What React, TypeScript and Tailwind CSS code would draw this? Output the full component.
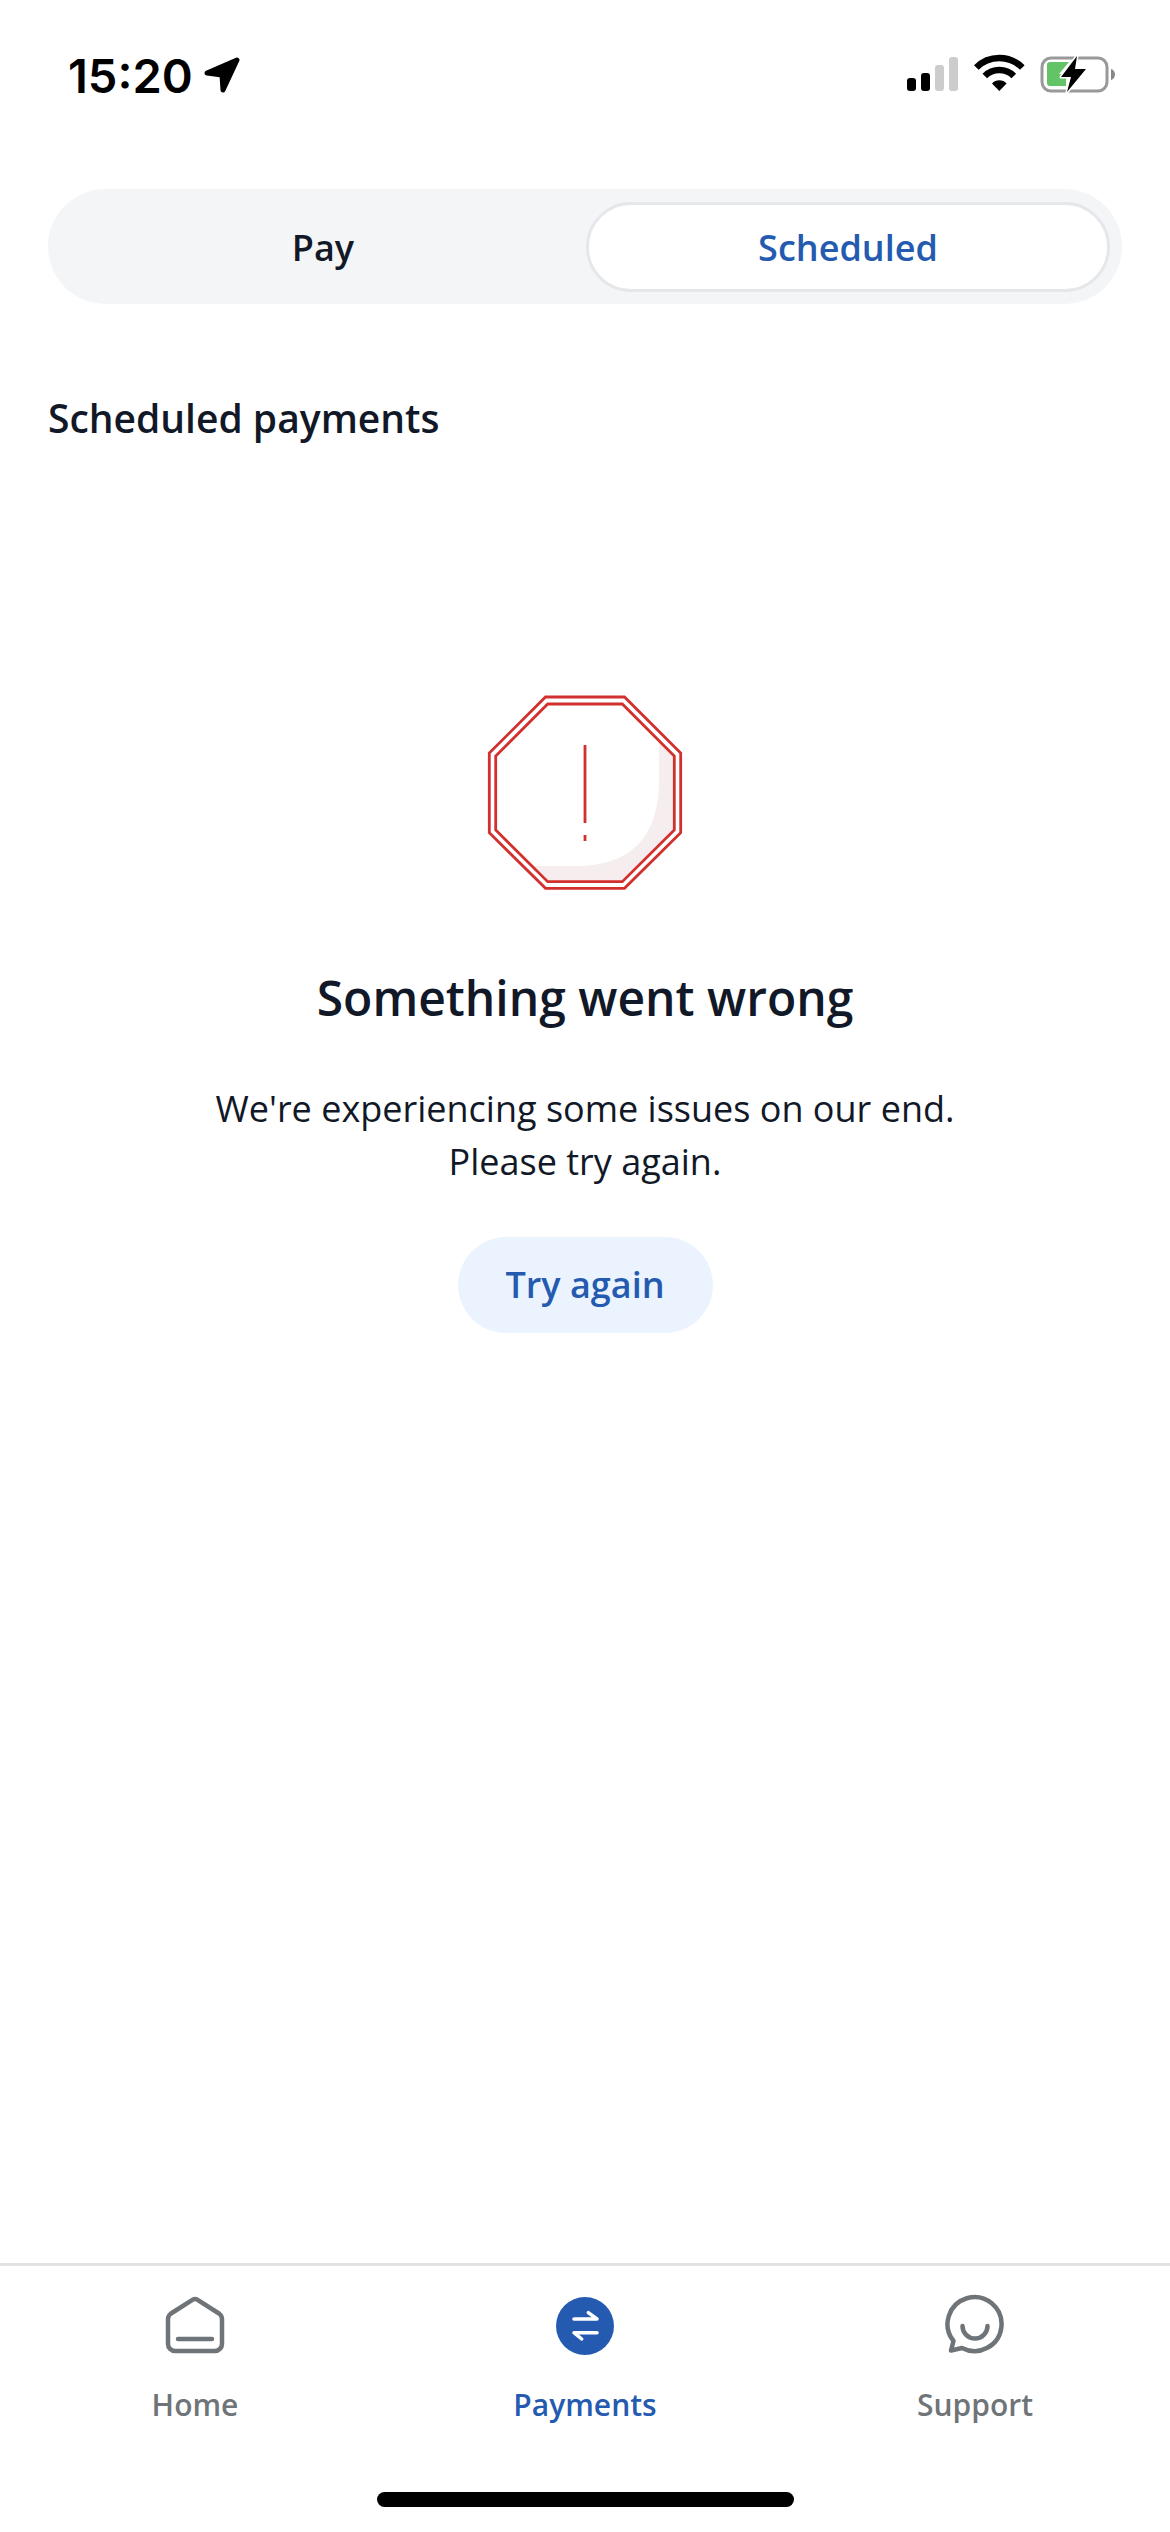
const StatusIcons = () => (
  <svg width="260" height="90" viewBox="0 0 260 90">
    <rect x="27" y="48" width="9" height="13" rx="3" fill="#000" />
    <rect x="41" y="43" width="9" height="18" rx="3" fill="#000" />
    <rect x="55" y="35" width="9" height="26" rx="3" fill="#ccc" />
    <rect x="69" y="27" width="9" height="34" rx="3" fill="#ccc" />
    <path d="M96.300 37.500A32.500 32.500 0 0 1 142.300 37.500" fill="none" stroke="#000" strokeWidth="6.500" />
    <path d="M104.800 46A20.500 20.500 0 0 1 133.800 46" fill="none" stroke="#000" strokeWidth="6.500" />
    <path d="M119.300 61L112 53.500A10 10 0 0 1 126.600 53.500Z" fill="#000" />
    <rect x="162" y="28" width="65" height="33" rx="9" fill="none" stroke="#999" strokeWidth="3" />
    <path d="M231 39v11a6 6 0 0 0 4-5.500a6 6 0 0 0-4-5.500Z" fill="#888" />
    <path d="M170 32H189L179 44H186V56H170a3 3 0 0 1-3-3V35a3 3 0 0 1 3-3Z" fill="#63c467" />
    <path d="M197 26L181 47H191L187 62L206 39H195Z" fill="#000" stroke="#fff" strokeWidth="3" paintOrder="stroke" strokeLinejoin="round" />
  </svg>
);

const Octagon = () => (
  <svg width="240" height="220" viewBox="0 0 240 220">
    <polygon points="82.700,24 157.300,24 209.300,76 209.300,150 157.300,201.700 82.700,201.700 30.700,150 30.700,76" fill="#f6eeee" />
    <path d="M82.700 24H157.300L194 60V100Q194 186 110 186H67L30.700 150V76Z" fill="#fff" />
    <polygon points="82.700,24 157.300,24 209.300,76 209.300,150 157.300,201.700 82.700,201.700 30.700,150 30.700,76" fill="none" stroke="#d2302e" strokeWidth="2.800" />
    <polygon points="80.500,17 159.500,17 215.700,73 215.700,152.700 159.500,208.300 80.500,208.300 24.300,152.700 24.300,73" fill="none" stroke="#d2302e" strokeWidth="2.800" />
    <path d="M120 65V143M120 155V161" fill="none" stroke="#d2302e" strokeWidth="2.800" />
  </svg>
);

const HomeIcon = () => (
  <svg width="64" height="64" viewBox="0 0 64 64" fill="none" stroke="#6f7478" strokeWidth="4.500" strokeLinecap="round" strokeLinejoin="round">
    <path d="M29.800 5.700a4 4 0 0 1 4.400 0L56 19.500a7 7 0 0 1 3 5.500V50a7 7 0 0 1-7 7H12a7 7 0 0 1-7-7V25a7 7 0 0 1 3-5.500Z" />
    <path d="M15 45H49" strokeWidth="4.500" />
  </svg>
);

const PaymentsIcon = () => (
  <div className="flex h-16 w-16 items-center justify-center">
    <div className="h-[58px] w-[58px] rounded-full bg-[#245bb0]">
      <svg width="58" height="58" viewBox="0 0 58 58" fill="none" stroke="#fff" strokeWidth="3.500" strokeLinecap="round" strokeLinejoin="round">
        <path d="M18 22H41L32.300 15.700" />
        <path d="M41 35.700H18L25.700 42" />
      </svg>
    </div>
  </div>
);

const SupportIcon = () => (
  <svg width="64" height="64" viewBox="0 0 64 64" fill="none" stroke="#6f7478" strokeWidth="4.500" strokeLinecap="round" strokeLinejoin="round">
    <path d="M10.500 47L8 56.500L19 54A27 27 0 1 0 10.500 47Z" />
    <path d="M19.500 32a12.500 12.500 0 0 0 25 0" />
  </svg>
);

const tabs = [
  { label: "Home", icon: <HomeIcon />, active: false },
  { label: "Payments", icon: <PaymentsIcon />, active: true },
  { label: "Support", icon: <SupportIcon />, active: false },
];

export default function App() {
  return (
    <div className="flex h-[2532px] w-[1170px] flex-col overflow-hidden bg-white font-['Open_Sans',sans-serif]">
      {/* status bar */}
      <div className="flex h-[150px] items-center justify-between pl-[68px] pr-[30px]">
        <div className="flex items-center gap-[11px]">
          <span className="font-['Inter',sans-serif] text-[47px] leading-none font-semibold text-black">15:20</span>
          <svg width="36" height="36" viewBox="0 0 36 36" fill="#000" stroke="#000" strokeWidth="5" strokeLinejoin="round">
            <path d="M33 3L19 33L18 18L3 16Z" />
          </svg>
        </div>
        <StatusIcons />
      </div>

      {/* segmented control */}
      <div className="mx-12 mt-[39px] flex h-[115px] items-center rounded-full bg-[#f4f5f7] pl-3 pr-3">
        <div className="flex-1 pt-[2px] text-center text-[36px] font-semibold text-[#111827]">Pay</div>
        <div className="flex h-[90px] w-[524px] items-center justify-center rounded-full border-[3px] border-[#e5e7eb] bg-white pt-[2px] text-[36px] font-semibold text-[#245bb0]">
          Scheduled
        </div>
      </div>

      <h2 className="mx-12 mt-[90px] text-[39px] leading-[48px] font-semibold text-[#111827]">Scheduled payments</h2>

      {/* error state */}
      <div className="mt-[238px] flex flex-col items-center">
        <Octagon />
        <h1 className="mt-[66px] text-[48px] leading-[64px] font-semibold text-[#111827]">Something went wrong</h1>
        <p className="mt-[52px] text-center text-[36px] leading-[53px] text-[#111827]">
          We're experiencing some issues on our end.
          <br />
          Please try again.
        </p>
        <button type="button" className="mt-[49px] h-[96px] w-[255px] rounded-full bg-[#ebf4fe] text-[36px] font-semibold text-[#245bb0]">
          Try again
        </button>
      </div>

      {/* tab bar */}
      <div className="mt-auto flex h-[269px] flex-col border-t-[3px] border-[#e2e2e2]">
        <div className="grid grid-cols-3 pt-7">
          {tabs.map((tab) => (
            <div key={tab.label} className="flex flex-col items-center">
              {tab.icon}
              <span className={tab.active ? "mt-[27px] text-[30px] leading-[40px] font-semibold text-[#245bb0]" : "mt-[27px] text-[30px] leading-[40px] font-semibold text-[#6f7478]"}>
                {tab.label}
              </span>
            </div>
          ))}
        </div>
        <div className="mx-auto mt-[67px] h-[15px] w-[417px] rounded-full bg-black" />
      </div>
    </div>
  );
}
